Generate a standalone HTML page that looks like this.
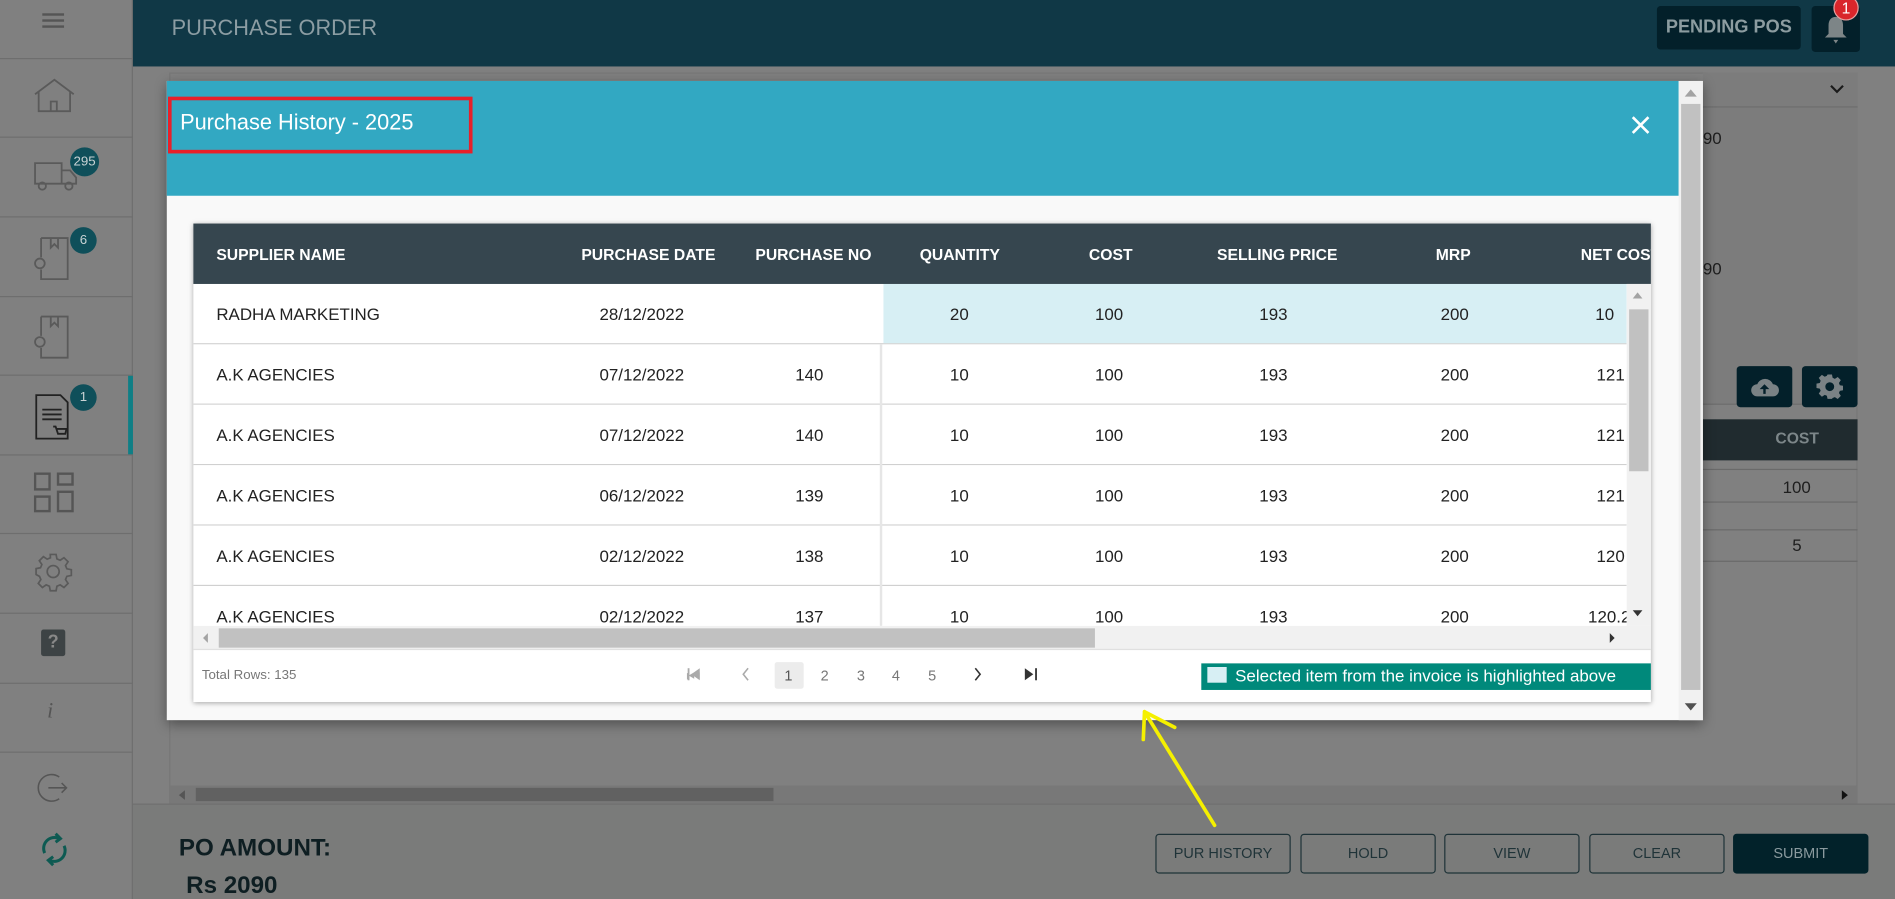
<!DOCTYPE html>
<html><head><meta charset="utf-8">
<style>
*{box-sizing:border-box;margin:0;padding:0}
html,body{width:1895px;height:899px;overflow:hidden;background:#808080;font-family:"Liberation Sans",sans-serif}
#w{position:absolute;left:0;top:0;width:1568px;height:744px;transform:scale(1.20855,1.20833);transform-origin:0 0;background:#808080;overflow:hidden}
.a{position:absolute}
.sep{position:absolute;left:0;width:110px;height:1px;background:#6e6e6e}
.badge{position:absolute;width:22px;height:22px;border-radius:50%;background:#0f4f5a;color:#c9d3d5;font-size:11px;text-align:center;line-height:22px}
.th{position:absolute;top:203px;color:#fff;font-size:13px;font-weight:bold;white-space:nowrap}
.row{position:absolute;left:160px;width:1186px;height:50px;border-bottom:1px solid #d0d0d0;background:#fff}
.c{position:absolute;top:17px;font-size:14px;color:#222;white-space:nowrap}
.btn{position:absolute;top:690px;width:112px;height:33px;border:1px solid #1f3338;border-radius:3px;color:#1f3338;font-size:12px;text-align:center;line-height:31px}
.pg{position:absolute;top:552px;font-size:12px;color:#777}
</style></head><body><div id="w">
<!-- sidebar -->
<div class="a" style="left:0;top:0;width:110px;height:744px;background:#808080;border-right:1px solid #6e6e6e"></div>
<div class="a" style="left:35px;top:11px;width:18px;height:2px;background:#555;box-shadow:0 5px 0 #555,0 10px 0 #555"></div>
<div class="sep" style="top:48px"></div><div class="sep" style="top:113px"></div><div class="sep" style="top:179px"></div><div class="sep" style="top:245px"></div><div class="sep" style="top:310px"></div><div class="sep" style="top:376px"></div><div class="sep" style="top:441px"></div><div class="sep" style="top:507px"></div><div class="sep" style="top:565px"></div><div class="sep" style="top:622px"></div>
<div class="a" style="left:106px;top:311px;width:4px;height:65px;background:#0f7f86"></div>
<svg class="a" style="left:28px;top:64px" width="34" height="30" viewBox="0 0 34 30" fill="none" stroke="#5a5a5a" stroke-width="1.5"><path d="M1 14L17 2L33 14M4 12V28H30V12M14 28V20H19V28"/></svg>
<svg class="a" style="left:28px;top:132px" width="36" height="26" viewBox="0 0 36 26" fill="none" stroke="#5a5a5a" stroke-width="1.5"><path d="M1 3H23V20H1ZM23 9H30L35 15V20H23"/><circle cx="7" cy="22" r="3"/><circle cx="29" cy="22" r="3"/></svg>
<div class="badge" style="left:58px;top:122px;width:24px;height:24px;line-height:24px">295</div>
<svg class="a" style="left:28px;top:193px" width="30" height="40" viewBox="0 0 30 40" fill="none" stroke="#5a5a5a" stroke-width="1.5"><path d="M6 4H28V38H6V30M6 20V4M14 4V12L17 9L20 12V4"/><circle cx="5" cy="25" r="4"/></svg>
<div class="badge" style="left:58px;top:188px">6</div>
<svg class="a" style="left:28px;top:258px" width="30" height="40" viewBox="0 0 30 40" fill="none" stroke="#5a5a5a" stroke-width="1.5"><path d="M6 4H28V38H6V30M6 20V4M14 4V12L17 9L20 12V4"/><circle cx="5" cy="25" r="4"/></svg>
<svg class="a" style="left:28px;top:325px" width="30" height="40" viewBox="0 0 30 40" fill="none" stroke="#222" stroke-width="1.5"><path d="M2 2H22L28 8V38H2ZM7 14H23M7 18H23M7 22H23"/><path d="M16 28H18L20 34H26L27 30H19"/></svg>
<div class="badge" style="left:58px;top:318px">1</div>
<svg class="a" style="left:28px;top:391px" width="34" height="34" viewBox="0 0 34 34" fill="none" stroke="#555" stroke-width="2"><rect x="1" y="1" width="12" height="13"/><rect x="20" y="1" width="12" height="9"/><rect x="1" y="20" width="12" height="12"/><rect x="20" y="16" width="12" height="16"/></svg>
<svg class="a" style="left:27px;top:456px" width="34" height="34" viewBox="0 0 24 24" fill="none" stroke="#5a5a5a" stroke-width="1"><circle cx="12" cy="12" r="3.5"/><path d="M10.3 2h3.4l.5 2.6 1.9.8 2.2-1.5 2.4 2.4-1.5 2.2.8 1.9 2.6.5v3.4l-2.6.5-.8 1.9 1.5 2.2-2.4 2.4-2.2-1.5-1.9.8-.5 2.6h-3.4l-.5-2.6-1.9-.8-2.2 1.5-2.4-2.4 1.5-2.2-.8-1.9L2 13.7v-3.4l2.6-.5.8-1.9-1.5-2.2 2.4-2.4 2.2 1.5 1.9-.8z"/></svg>
<div class="a" style="left:34px;top:521px;width:20px;height:22px;background:#3d4345;border-radius:2px;color:#888;font-size:15px;font-weight:bold;text-align:center;line-height:22px">?</div>
<div class="a" style="left:39px;top:578px;font-family:'Liberation Serif',serif;font-style:italic;font-size:18px;color:#555">i</div>
<svg class="a" style="left:30px;top:638px" width="28" height="28" viewBox="0 0 28 28" fill="none" stroke="#555" stroke-width="1.3"><path d="M19 5A11 11 0 1 0 19 23M10 14H25M21 10L25 14L21 18"/></svg>
<svg class="a" style="left:33px;top:688px" width="24" height="30" viewBox="0 0 24 30" fill="none" stroke="#0d5a52" stroke-width="2.5"><path d="M4 18A9 9 0 0 1 16 6M20 12A9 9 0 0 1 8 24"/><path d="M13 2L17 6L13 9M11 21L7 24L11 28"/></svg>
<!-- header -->
<div class="a" style="left:110px;top:0;width:1458px;height:55px;background:#103846"></div>
<div class="a" style="left:142px;top:13px;font-size:18px;color:#8c9da3">PURCHASE ORDER</div>
<div class="a" style="left:1371px;top:5px;width:119px;height:36px;background:#03202a;border-radius:3px;color:#8c9ca0;font-size:15px;font-weight:bold;text-align:center;line-height:36px">PENDING POS</div>
<div class="a" style="left:1499px;top:5px;width:40px;height:38px;background:#03202a;border-radius:3px"></div>
<svg class="a" style="left:1509px;top:13px" width="20" height="24" viewBox="0 0 20 24"><path d="M10 1C6 1 4 4 4 8V15L1 18H19L16 15V8C16 4 14 1 10 1ZM8 20H12L10 23Z" fill="#7d8587"/></svg>
<div class="a" style="left:1517px;top:-4px;width:21px;height:21px;border-radius:50%;background:#d9262b;border:1px solid #e8a0a0;color:#fff;font-size:13px;text-align:center;line-height:20px">1</div>
<!-- background content -->
<div class="a" style="left:140px;top:60px;width:1397px;height:605px;border:1px solid #777"></div>
<div class="a" style="left:1409px;top:60px;width:128px;height:275px;background:#7c7c7c;border-bottom:1px solid #6d6d6d"></div>
<div class="a" style="left:1409px;top:88px;width:128px;height:1px;background:#6d6d6d"></div>
<svg class="a" style="left:1514px;top:70px" width="12" height="8" viewBox="0 0 12 8" fill="none" stroke="#1a1a1a" stroke-width="1.8"><path d="M1 1L6 6L11 1"/></svg>
<div class="a" style="left:1409px;top:106px;font-size:14px;color:#1e1e1e">90</div>
<div class="a" style="left:1409px;top:214px;font-size:14px;color:#1e1e1e">90</div>
<div class="a" style="left:1437px;top:303px;width:46px;height:34px;background:#03202a;border-radius:3px"></div>
<svg class="a" style="left:1448px;top:310px" width="24" height="20" viewBox="0 0 24 20"><path d="M6 18A5 5 0 0 1 6 8A7 7 0 0 1 19 8A5 5 0 0 1 19 18Z" fill="#7a8285"/><path d="M12 8L8 12H11V16H13V12H16Z" fill="#03202a"/></svg>
<div class="a" style="left:1491px;top:303px;width:46px;height:34px;background:#03202a;border-radius:3px"></div>
<svg class="a" style="left:1503px;top:309px" width="22" height="22" viewBox="0 0 24 24"><path fill="#7a8285" fill-rule="evenodd" d="M10 1h4l.6 3 2 1 2.6-1.7 2.8 2.8L20.3 8.7l.8 2 2.9.5v4l-2.9.6-.8 1.9 1.7 2.6-2.8 2.8-2.6-1.7-2 .8L14 23h-4l-.6-2.8-1.9-.8-2.6 1.7-2.8-2.8 1.7-2.6-.8-1.9L0 13.2v-4l3-.5.8-2L2.1 4.1 4.9 1.3l2.6 1.7 1.9-.8zM12 8a4 4 0 1 0 0 8 4 4 0 0 0 0-8z"/></svg>
<div class="a" style="left:1409px;top:347px;width:128px;height:34px;background:#202b2f"></div>
<div class="a" style="left:1469px;top:355px;font-size:13px;font-weight:bold;color:#7c8689">COST</div>
<div class="a" style="left:1409px;top:388px;width:128px;height:1px;background:#6a6a6a"></div>
<div class="a" style="left:1475px;top:395px;font-size:14px;color:#1e1e1e">100</div>
<div class="a" style="left:1409px;top:415px;width:128px;height:1px;background:#6a6a6a"></div>
<div class="a" style="left:1409px;top:438px;width:128px;height:1px;background:#6a6a6a"></div>
<div class="a" style="left:1483px;top:443px;font-size:14px;color:#1e1e1e">5</div>
<div class="a" style="left:1409px;top:464px;width:128px;height:1px;background:#6a6a6a"></div>
<div class="a" style="left:141px;top:650px;width:1396px;height:15px;background:#787878"></div>
<div class="a" style="left:162px;top:652px;width:478px;height:11px;background:#616161"></div>
<div class="a" style="left:148px;top:654px;width:0;height:0;border-top:4px solid transparent;border-bottom:4px solid transparent;border-right:5px solid #555"></div>
<div class="a" style="left:1524px;top:654px;width:0;height:0;border-top:4px solid transparent;border-bottom:4px solid transparent;border-left:5px solid #111"></div>
<div class="a" style="left:110px;top:665px;width:1458px;height:79px;background:#7a7b7a;border-top:1px solid #707070"></div>
<div class="a" style="left:148px;top:691px;font-size:20px;font-weight:bold;color:#0e1e22">PO AMOUNT:</div>
<div class="a" style="left:154px;top:722px;font-size:20px;font-weight:bold;color:#0e1e22">Rs 2090</div>
<div class="btn" style="left:956px">PUR HISTORY</div>
<div class="btn" style="left:1076px">HOLD</div>
<div class="btn" style="left:1195px">VIEW</div>
<div class="btn" style="left:1315px">CLEAR</div>
<div class="btn" style="left:1434px;background:#02222a;border-color:#02222a;color:#8a9a9e">SUBMIT</div>
<!-- modal -->
<div class="a" style="left:138px;top:67px;width:1271px;height:529px;background:#f9f9f9;box-shadow:0 3px 10px rgba(0,0,0,.4)"></div>
<div class="a" style="left:138px;top:67px;width:1251px;height:95px;background:#32a8c2"></div>
<div class="a" style="left:139px;top:80px;width:252px;height:47px;border:3px solid #e8202a"></div>
<div class="a" style="left:149px;top:91px;font-size:18px;color:#fff">Purchase History - 2025</div>
<svg class="a" style="left:1350px;top:96px" width="15" height="15" viewBox="0 0 15 15" stroke="#fff" stroke-width="2.2"><path d="M1 1L14 14M14 1L1 14"/></svg>
<div class="a" style="left:1389px;top:67px;width:20px;height:529px;background:#f1f1f1"></div>
<div class="a" style="left:1391px;top:86px;width:16px;height:485px;background:#c1c1c1"></div>
<div class="a" style="left:1394px;top:74px;border-left:5px solid transparent;border-right:5px solid transparent;border-bottom:6px solid #a3a3a3"></div>
<div class="a" style="left:1394px;top:582px;border-left:5px solid transparent;border-right:5px solid transparent;border-top:6px solid #505050"></div>
<!-- table -->
<div class="a" style="left:160px;top:185px;width:1206px;height:396px;background:#fff;box-shadow:0 1px 4px rgba(0,0,0,.35)"></div>
<div class="a" style="left:160px;top:185px;width:1206px;height:50px;background:#36464f"></div>
<div class="th" style="left:179px">SUPPLIER NAME</div>
<div class="th" style="left:481px">PURCHASE DATE</div>
<div class="th" style="left:625px">PURCHASE NO</div>
<div class="th" style="left:761px">QUANTITY</div>
<div class="th" style="left:901px">COST</div>
<div class="th" style="left:1007px">SELLING PRICE</div>
<div class="th" style="left:1188px">MRP</div>
<div class="th" style="left:1308px;width:58px;overflow:hidden">NET COST</div>
<div class="a" style="left:160px;top:235px;width:1186px;height:283px;overflow:hidden">
<div class="row" style="left:0;top:0"><div class="a" style="left:571px;top:0;width:615px;height:49px;background:#d7eff4"></div><div class="c" style="left:19px">RADHA MARKETING</div><div class="c" style="left:336px">28/12/2022</div><div class="c" style="left:626px">20</div><div class="c" style="left:746px">100</div><div class="c" style="left:882px">193</div><div class="c" style="left:1032px">200</div><div class="c" style="left:1160px">10</div></div>
<div class="row" style="left:0;top:50px"><div class="c" style="left:19px">A.K AGENCIES</div><div class="c" style="left:336px">07/12/2022</div><div class="c" style="left:498px">140</div><div class="c" style="left:626px">10</div><div class="c" style="left:746px">100</div><div class="c" style="left:882px">193</div><div class="c" style="left:1032px">200</div><div class="c" style="left:1161px">121</div></div>
<div class="row" style="left:0;top:100px"><div class="c" style="left:19px">A.K AGENCIES</div><div class="c" style="left:336px">07/12/2022</div><div class="c" style="left:498px">140</div><div class="c" style="left:626px">10</div><div class="c" style="left:746px">100</div><div class="c" style="left:882px">193</div><div class="c" style="left:1032px">200</div><div class="c" style="left:1161px">121</div></div>
<div class="row" style="left:0;top:150px"><div class="c" style="left:19px">A.K AGENCIES</div><div class="c" style="left:336px">06/12/2022</div><div class="c" style="left:498px">139</div><div class="c" style="left:626px">10</div><div class="c" style="left:746px">100</div><div class="c" style="left:882px">193</div><div class="c" style="left:1032px">200</div><div class="c" style="left:1161px">121</div></div>
<div class="row" style="left:0;top:200px"><div class="c" style="left:19px">A.K AGENCIES</div><div class="c" style="left:336px">02/12/2022</div><div class="c" style="left:498px">138</div><div class="c" style="left:626px">10</div><div class="c" style="left:746px">100</div><div class="c" style="left:882px">193</div><div class="c" style="left:1032px">200</div><div class="c" style="left:1161px">120</div></div>
<div class="row" style="left:0;top:250px"><div class="c" style="left:19px">A.K AGENCIES</div><div class="c" style="left:336px">02/12/2022</div><div class="c" style="left:498px">137</div><div class="c" style="left:626px">10</div><div class="c" style="left:746px">100</div><div class="c" style="left:882px">193</div><div class="c" style="left:1032px">200</div><div class="c" style="left:1154px">120.2</div></div>
<div class="a" style="left:568px;top:50px;width:2px;height:233px;background:#e6e6e6"></div>
</div>
<div class="a" style="left:1346px;top:235px;width:20px;height:283px;background:#f1f1f1"></div>
<div class="a" style="left:1348px;top:256px;width:16px;height:134px;background:#c1c1c1"></div>
<div class="a" style="left:1351px;top:242px;border-left:4px solid transparent;border-right:4px solid transparent;border-bottom:5px solid #a3a3a3"></div>
<div class="a" style="left:1351px;top:505px;border-left:4px solid transparent;border-right:4px solid transparent;border-top:5px solid #333"></div>
<div class="a" style="left:160px;top:518px;width:1206px;height:20px;background:#f1f1f1;border-bottom:1px solid #e0e0e0"></div>
<div class="a" style="left:181px;top:520px;width:725px;height:16px;background:#c1c1c1"></div>
<div class="a" style="left:168px;top:524px;border-top:4px solid transparent;border-bottom:4px solid transparent;border-right:4px solid #a3a3a3"></div>
<div class="a" style="left:1332px;top:524px;border-top:4px solid transparent;border-bottom:4px solid transparent;border-left:4px solid #333"></div>
<div class="a" style="left:167px;top:553px;font-size:11px;color:#777">Total Rows: 135</div>
<div class="pg" style="left:568px;font-size:13px;color:#aaa">⏮</div>
<svg class="a" style="left:568px;top:552px" width="12" height="12" viewBox="0 0 12 12"><rect x="1" y="1" width="1.5" height="10" fill="#aaa"/><path d="M11 1L4 6L11 11Z" fill="#aaa"/></svg>
<svg class="a" style="left:613px;top:552px" width="8" height="12" viewBox="0 0 8 12" fill="none" stroke="#aaa" stroke-width="1.3"><path d="M6 1L2 6L6 11"/></svg>
<div class="a" style="left:641px;top:548px;width:24px;height:22px;background:#ececec;border-radius:2px"></div>
<div class="pg" style="left:649px;color:#555">1</div>
<div class="pg" style="left:679px">2</div>
<div class="pg" style="left:709px">3</div>
<div class="pg" style="left:738px">4</div>
<div class="pg" style="left:768px">5</div>
<svg class="a" style="left:805px;top:552px" width="8" height="12" viewBox="0 0 8 12" fill="none" stroke="#333" stroke-width="1.3"><path d="M2 1L6 6L2 11"/></svg>
<svg class="a" style="left:847px;top:552px" width="12" height="12" viewBox="0 0 12 12"><path d="M1 1L8 6L1 11Z" fill="#333"/><rect x="9.5" y="1" width="1.5" height="10" fill="#333"/></svg>
<div class="a" style="left:994px;top:549px;width:372px;height:22px;background:#00897b"></div>
<div class="a" style="left:999px;top:552px;width:16px;height:13px;background:#d7eff4"></div>
<div class="a" style="left:1022px;top:551px;font-size:14px;color:#fff;white-space:nowrap">Selected item from the invoice is highlighted above</div>
<!-- yellow arrow -->
<svg class="a" style="left:930px;top:580px" width="90" height="110" viewBox="0 0 90 110" fill="none" stroke="#f5f000" stroke-width="3" stroke-linecap="round"><path d="M75 103L17 9M17 9L16 32M17 9L42 22"/></svg>
</div></body></html>
